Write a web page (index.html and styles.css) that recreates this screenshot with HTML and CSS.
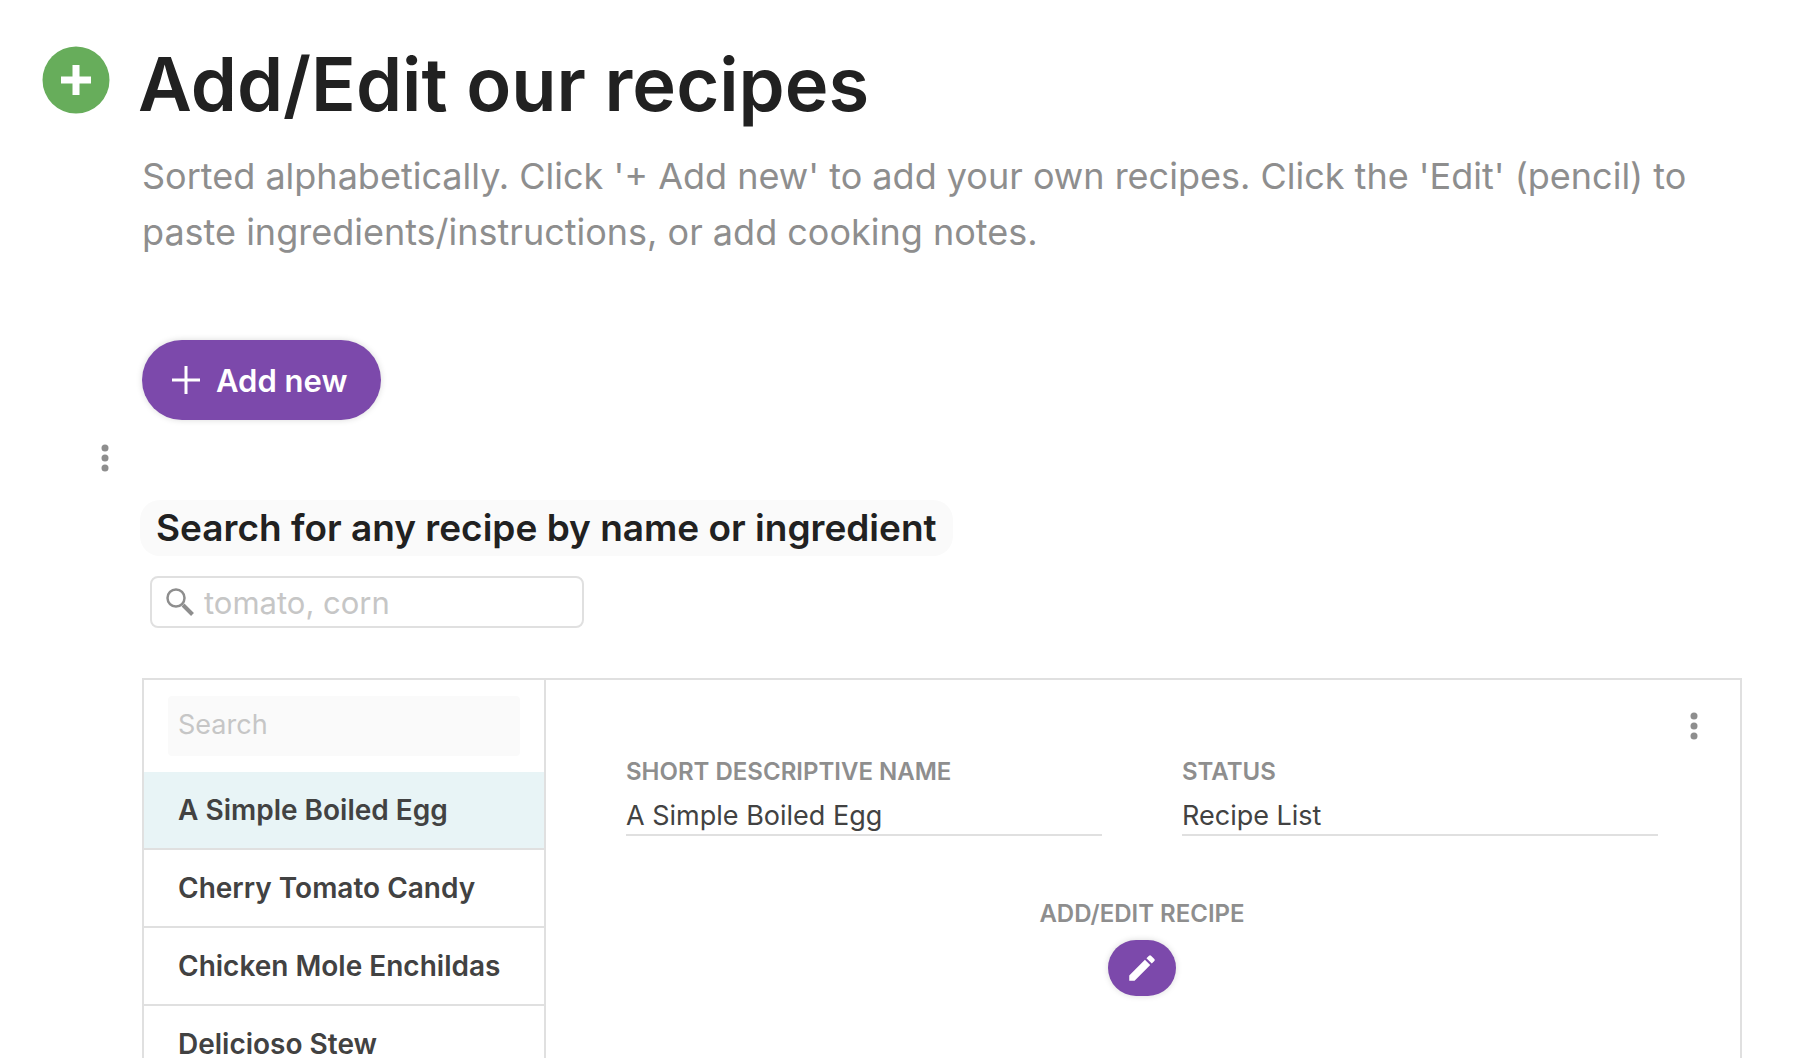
FILE: index.html
```html
<!DOCTYPE html>
<html lang="en">

<head>
    <meta charset="utf-8">
    <title>Add/Edit our recipes</title>
    <link rel="stylesheet" href="styles.css">
</head>

<body>
    <header class="pageHeader">
        <svg class="pageIcon" viewBox="0 0 68 68" aria-hidden="true">
            <circle cx="34" cy="34" r="33.5" fill="#67ad5b" />
            <path d="M34 19v30M19 34h30" stroke="#fff" stroke-width="7" />
        </svg>
        <h1>Add/Edit our recipes</h1>
    </header>
    <main>
        <p class="intro">Sorted alphabetically. Click '+ Add new' to add your own recipes. Click the 'Edit' (pencil) to paste ingredients/instructions, or add cooking notes.</p>
        <button class="addButton" type="button">
            <svg width="28" height="28" viewBox="0 0 28 28" aria-hidden="true">
                <path d="M14 0v28M0 14h28" stroke="#fff" stroke-width="3" />
            </svg>
            Add new
        </button>
        <div class="blockMenu">
            <button class="menuButton" type="button" aria-label="Block options">
                <svg width="8" height="28" viewBox="0 0 8 28" fill="#8e8e8e">
                    <circle cx="4" cy="4" r="3.5" />
                    <circle cx="4" cy="14" r="3.5" />
                    <circle cx="4" cy="24" r="3.5" />
                </svg>
            </button>
        </div>
        <h2><label for="recipeFilter">Search for any recipe by name or ingredient</label></h2>
        <div class="filterBox">
            <svg width="28" height="28" viewBox="0 0 28 28" fill="none" stroke="#8e8e8e" aria-hidden="true">
                <circle cx="10" cy="10" r="8.5" stroke-width="2.5" />
                <path d="M17 17l9.5 9.5" stroke-width="4" />
            </svg>
            <input id="recipeFilter" type="text" placeholder="tomato, corn">
        </div>
        <section class="recipes">
            <nav class="sidebar">
                <input class="listSearch" type="text" placeholder="Search" aria-label="Search recipes">
                <ul>
                    <li class="selected"><a href="#">A Simple Boiled Egg</a></li>
                    <li><a href="#">Cherry Tomato Candy</a></li>
                    <li><a href="#">Chicken Mole Enchildas</a></li>
                    <li><a href="#">Delicioso Stew</a></li>
                </ul>
            </nav>
            <div class="detail">
                <div class="detailMenu">
                    <button class="menuButton" type="button" aria-label="Recipe options">
                        <svg width="8" height="28" viewBox="0 0 8 28" fill="#8e8e8e">
                            <circle cx="4" cy="4" r="3.5" />
                            <circle cx="4" cy="14" r="3.5" />
                            <circle cx="4" cy="24" r="3.5" />
                        </svg>
                    </button>
                </div>
                <div class="fields">
                    <div class="field">
                        <label for="recipeName">SHORT DESCRIPTIVE NAME</label>
                        <input id="recipeName" type="text" value="A Simple Boiled Egg">
                    </div>
                    <div class="field">
                        <label for="recipeStatus">STATUS</label>
                        <input id="recipeStatus" type="text" value="Recipe List">
                    </div>
                </div>
                <div class="editField">
                    <label for="editRecipe">ADD/EDIT RECIPE</label>
                    <button id="editRecipe" class="editButton" type="button">
                        <svg width="34" height="34" viewBox="0 0 24 24" fill="#fff" aria-hidden="true">
                            <path d="M3 17.25V21h3.75L17.81 9.94l-3.75-3.75L3 17.25zM20.71 7.04a1 1 0 0 0 0-1.41l-2.34-2.34a1 1 0 0 0-1.41 0l-1.83 1.83 3.75 3.75 1.83-1.83z" />
                        </svg>
                    </button>
                </div>
            </div>
        </section>
    </main>
</body>

</html>
```
FILE: styles.css
```css
* {
    box-sizing: border-box;
}

body {
    margin: 0;
    font-family: Inter, "Liberation Sans", sans-serif;
    color: #212121;
    background-color: #fff;
    height: 100vh;
    overflow: hidden;
}

button,
input {
    font-family: inherit;
    border: none;
}

button {
    cursor: pointer;
}

input::placeholder {
    color: #c6c6c6;
    opacity: 1;
}

.pageHeader {
    display: flex;
    align-items: flex-start;
    gap: 28px;
    padding: 36px 42px 0;
}

.pageIcon {
    width: 68px;
    height: 68px;
    margin-top: 10px;
}

h1 {
    margin: 0;
    font-size: 74px;
    font-weight: 600;
    line-height: 96px;
}

main {
    padding: 16px 62px 0 142px;
}

.intro {
    margin: 0;
    font-size: 36px;
    line-height: 56px;
    color: #8e8e8e;
}

.addButton {
    display: flex;
    align-items: center;
    gap: 16px;
    height: 80px;
    margin-top: 80px;
    padding: 0 34px 0 30px;
    border-radius: 40px;
    font-size: 31px;
    font-weight: 600;
    color: #fff;
    background-color: #7c49ab;
    box-shadow: 0 0 6px rgba(0, 0, 0, 0.15);
}

.menuButton {
    display: flex;
    padding: 0;
    background: none;
}

.blockMenu {
    margin-top: 24px;
    margin-left: -41px;
}

h2 {
    width: fit-content;
    margin: 28px 0 0 -2px;
    padding: 0 16px;
    border-radius: 20px;
    font-size: 37px;
    font-weight: 600;
    line-height: 56px;
    background-color: #fafafa;
}

.filterBox {
    display: flex;
    align-items: center;
    gap: 10px;
    width: 434px;
    height: 52px;
    margin: 20px 0 0 8px;
    padding: 0 14px;
    border: 2px solid #e0e0e0;
    border-radius: 8px;
}

.filterBox input {
    flex: 1;
    min-width: 0;
    padding: 0;
    font-size: 31px;
    background: none;
}

.recipes {
    display: flex;
    min-height: 600px;
    margin-top: 50px;
    border: 2px solid #e0e0e0;
}

.sidebar {
    width: 402px;
    border-right: 2px solid #e0e0e0;
}

.listSearch {
    display: block;
    width: 352px;
    height: 60px;
    margin: 16px 24px;
    padding: 0 10px 4px;
    border-radius: 4px;
    font-size: 27px;
    background-color: #fafafa;
}

.sidebar ul {
    margin: 0;
    padding: 0;
    list-style: none;
}

.sidebar li {
    border-bottom: 2px solid #e0e0e0;
}

.sidebar a {
    display: block;
    padding: 0 34px;
    font-size: 28px;
    font-weight: 600;
    line-height: 76px;
    color: #424242;
    text-decoration: none;
}

.selected {
    background-color: #e8f4f6;
}

.detail {
    flex: 1;
    padding: 32px 42px 0 80px;
}

.detailMenu {
    display: flex;
    justify-content: flex-end;
}

.fields {
    display: grid;
    grid-template-columns: 1fr 1fr;
    gap: 80px;
    margin-top: 16px;
    margin-right: 40px;
}

.field {
    display: flex;
    flex-direction: column;
    gap: 8px;
}

.detail label {
    font-size: 24px;
    font-weight: 600;
    line-height: 32px;
    color: #8e8e8e;
}

.field input {
    width: 100%;
    height: 40px;
    padding: 0;
    border-bottom: 2px solid #e0e0e0;
    font-size: 27px;
    color: #424242;
    background: none;
}

.editField {
    display: flex;
    flex-direction: column;
    align-items: center;
    gap: 10px;
    margin-top: 62px;
    margin-right: 40px;
}

.editButton {
    display: flex;
    align-items: center;
    justify-content: center;
    width: 68px;
    height: 56px;
    padding: 0;
    border-radius: 28px;
    background-color: #7c49ab;
    box-shadow: 0 0 6px rgba(0, 0, 0, 0.15);
}
```
